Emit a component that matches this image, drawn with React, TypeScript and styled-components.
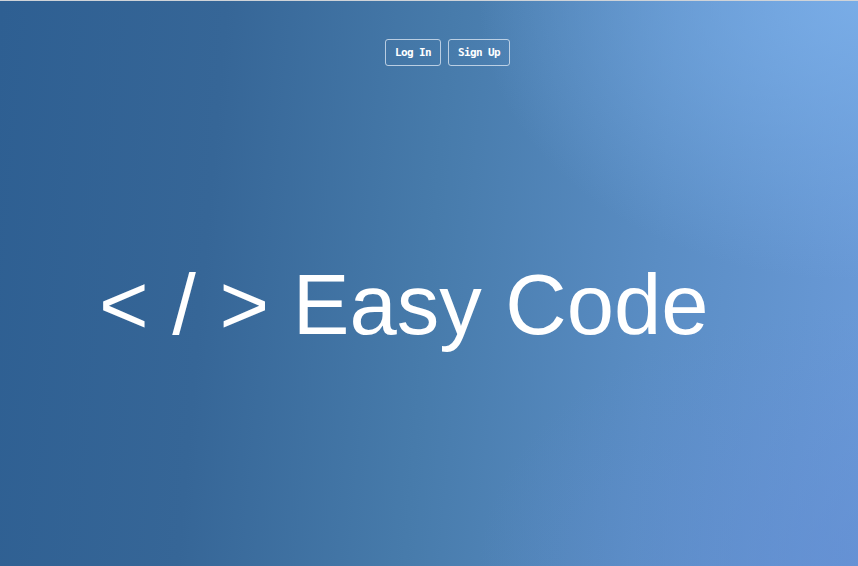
import React from "react";
import styled, { createGlobalStyle } from "styled-components";

const Global = createGlobalStyle`
  html, body { margin: 0; padding: 0; }
  body { font-family: "Liberation Sans", Arial, sans-serif; background: #2f6093; }
`;

const Page = styled.div`
  box-sizing: border-box;
  width: 100%;
  height: 566px;
  border-top: 1px solid #cfd3d8;
  display: flex;
  flex-direction: column;
  overflow: hidden;
  background:
    radial-gradient(ellipse 380px 280px at 100% 0%, rgba(124, 176, 234, 0.85), rgba(124, 176, 234, 0) 100%),
    radial-gradient(ellipse 380px 260px at 100% 100%, rgba(98, 140, 210, 0.6), rgba(98, 140, 210, 0) 100%),
    linear-gradient(95deg, #2e5f92 0%, #366697 25%, #477bab 50%, #5a8dc4 75%, #6a9ad8 100%);
`;

const Nav = styled.nav`
  display: flex;
  justify-content: center;
  gap: 7px;
  padding-top: 38px;
  padding-left: 37px;
`;

const NavButton = styled.button<{ $w: number }>`
  box-sizing: border-box;
  width: ${(p) => p.$w}px;
  height: 27px;
  padding: 0;
  background: transparent;
  border: 1px solid rgba(225, 235, 245, 0.75);
  border-radius: 3px;
  color: #ffffff;
  font-family: "DejaVu Sans Mono", "Liberation Mono", monospace;
  font-weight: bold;
  font-size: 11px;
  letter-spacing: -0.6px;
  cursor: pointer;
`;

const Hero = styled.h1`
  margin: 196px 0 0 0;
  padding-left: 99px;
  font-family: "Liberation Sans", Arial, Helvetica, sans-serif;
  font-weight: normal;
  font-size: 85px;
  line-height: 1;
  color: #ffffff;
  white-space: nowrap;
`;

export default function App() {
  return (
    <>
      <Global />
      <Page>
        <Nav>
          <NavButton $w={56}>Log In</NavButton>
          <NavButton $w={62}>Sign Up</NavButton>
        </Nav>
        <Hero>&lt; / &gt; Easy Code</Hero>
      </Page>
    </>
  );
}
